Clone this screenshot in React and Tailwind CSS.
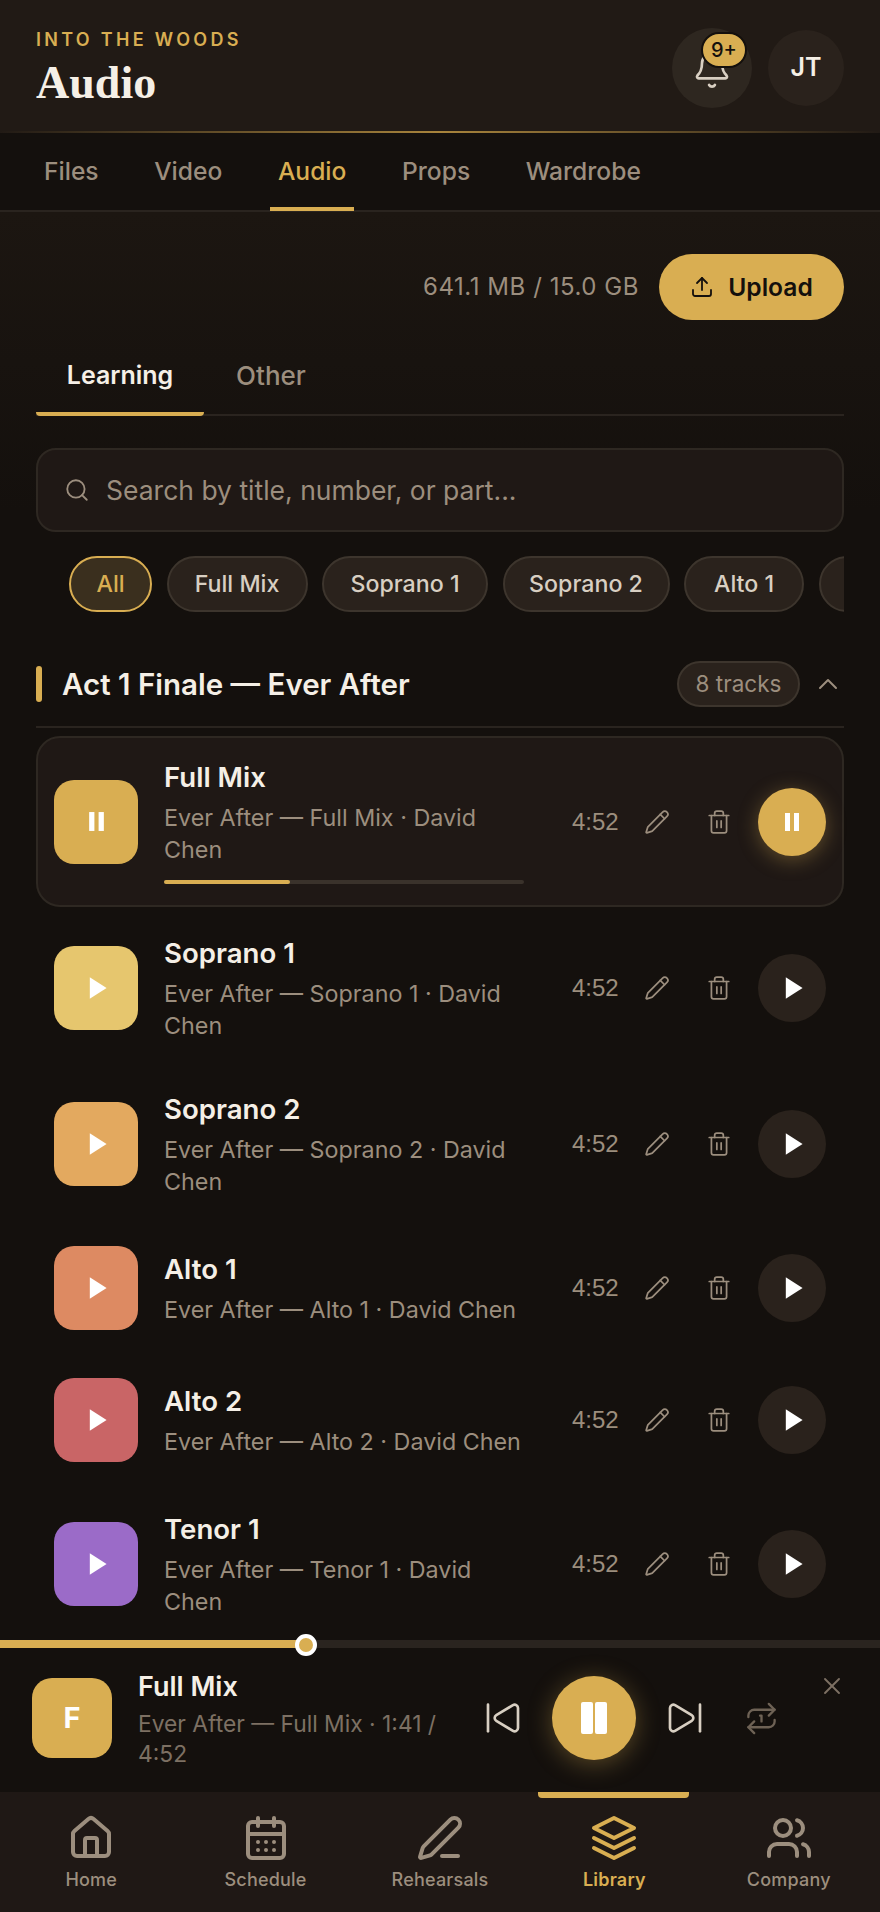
import React from "react";
import {
  Bell,
  CalendarDays,
  ChevronUp,
  House,
  Pencil,
  PenLine,
  Repeat1,
  Search,
  SkipBack,
  SkipForward,
  Trash2,
  Upload,
  Users,
  X,
} from "lucide-react";

const tracks = [
  { id: 2, name: "Soprano 1", sub: "Ever After — Soprano 1 · David Chen", color: "bg-[#e6c66e]", tall: true },
  { id: 3, name: "Soprano 2", sub: "Ever After — Soprano 2 · David Chen", color: "bg-[#e3a95f]", tall: true },
  { id: 4, name: "Alto 1", sub: "Ever After — Alto 1 · David Chen", color: "bg-[#dd8a62]", tall: false },
  { id: 5, name: "Alto 2", sub: "Ever After — Alto 2 · David Chen", color: "bg-[#c96566]", tall: false },
  { id: 6, name: "Tenor 1", sub: "Ever After — Tenor 1 · David Chen", color: "bg-[#9b6bc8]", tall: true },
];

const mainTabs = ["Files", "Video", "Audio", "Props", "Wardrobe"];
const chips = [
  { label: "All", w: "w-[83px]" },
  { label: "Full Mix", w: "w-[141px]" },
  { label: "Soprano 1", w: "w-[166px]" },
  { label: "Soprano 2", w: "w-[167px]" },
  { label: "Alto 1", w: "w-[120px]" },
  { label: "Alto 2", w: "w-[120px]" },
];

function PlayGlyph({ size = 24 }) {
  return (
    <svg className="ml-[2px]" width={size} height={size} viewBox="0 0 20 20" fill="#fff">
      <path d="M4 1 L18 10 L4 19 Z" />
    </svg>
  );
}

function PauseGlyph({ size = 20 }) {
  return (
    <svg width={size} height={size} viewBox="0 0 20 20" fill="#fff">
      <rect x="3" y="1" width="5" height="18" />
      <rect x="12" y="1" width="5" height="18" />
    </svg>
  );
}

function LayersIcon() {
  return (
    <svg width="48" height="48" viewBox="0 0 24 24" fill="none" stroke="#d9ae52" strokeWidth="2" strokeLinecap="round" strokeLinejoin="round">
      <path d="M12 2 L22 7 L12 12 L2 7 Z" />
      <path d="M2 12 L12 17 L22 12" />
      <path d="M2 17 L12 22 L22 17" />
    </svg>
  );
}

function TrackActions({ playing }) {
  return (
    <div className="flex items-center shrink-0">
      <span className="text-[24px] text-[#9c8e7e] font-['Liberation_Sans',sans-serif] w-[47px]">4:52</span>
      <button className="w-[62px] ml-[7px] flex justify-center text-[#9c8e7e]">
        <Pencil size={26} strokeWidth={1.6} />
      </button>
      <button className="w-[62px] flex justify-center text-[#9c8e7e]">
        <Trash2 size={26} strokeWidth={1.6} />
      </button>
      {playing ? (
        <button className="w-[68px] h-[68px] ml-[8px] rounded-full bg-[#d9ae52] flex items-center justify-center shadow-[0_4px_20px_rgba(217,174,82,0.35)]">
          <PauseGlyph size={20} />
        </button>
      ) : (
        <button className="w-[68px] h-[68px] ml-[8px] rounded-full bg-[#2a221c] flex items-center justify-center">
          <PlayGlyph size={24} />
        </button>
      )}
    </div>
  );
}

function TrackRow({ track }) {
  return (
    <div className={`flex items-center px-[18px] ${track.tall ? "h-[156px]" : "h-[132px]"}`}>
      <div className={`w-[84px] h-[84px] rounded-[20px] shrink-0 flex items-center justify-center ${track.color}`}>
        <PlayGlyph size={24} />
      </div>
      <div className="w-[360px] ml-[26px] mr-[48px] shrink-0">
        <div className="text-[27.6px] leading-[36px] font-semibold text-[#f5efe6]">{track.name}</div>
        <div className="text-[23.3px] leading-[32px] text-[#9c8e7e] mt-[7px]">{track.sub}</div>
      </div>
      <TrackActions />
    </div>
  );
}

function NavItem({ label, icon, active }) {
  return (
    <div className={`flex flex-col items-center pt-[22px] ${active ? "text-[#d9ae52]" : "text-[#9c8e7e]"}`}>
      {icon}
      <span className={`text-[18px] leading-[24px] tracking-[0.2px] mt-[6px] ${active ? "font-semibold" : "font-medium"}`}>{label}</span>
    </div>
  );
}

export default function App() {
  return (
    <div className="w-[880px] h-[1912px] flex flex-col overflow-hidden bg-[#14100d] font-['Inter',sans-serif]">
      <header className="h-[133px] shrink-0 bg-[#211a15] flex items-center justify-between px-[36px] pt-[3px] relative">
        <div className="pt-[3px]">
          <div className="text-[18px] leading-[24px] font-semibold tracking-[3.3px] text-[#d9ae52]">INTO THE WOODS</div>
          <h1 className="mt-[3px] text-[46px] leading-[56px] font-bold text-[#f5efe6] font-['Liberation_Serif',serif]">Audio</h1>
        </div>
        <div className="flex items-center gap-[16px]">
          <button className="relative w-[80px] h-[80px] rounded-full bg-[#2e2720] flex items-center justify-center text-[#d8cfc2]">
            <Bell className="mt-[3px]" size={40} strokeWidth={1.6} />
            <span className="absolute top-[4px] left-[29px] w-[46px] h-[36px] rounded-full bg-[#d9ae52] border-[2px] border-[#14100d] flex items-center justify-center text-[20px] font-medium text-[#14100d]">9+</span>
          </button>
          <button className="w-[76px] h-[76px] rounded-full bg-[#2a221c] text-[#f5efe6] text-[25px] font-semibold">JT</button>
        </div>
        <div className="absolute left-0 right-0 bottom-0 h-[2px] bg-gradient-to-r from-transparent via-[#a8843c] to-transparent"></div>
      </header>

      <nav className="h-[79px] shrink-0 flex items-start pl-[36px] border-b-[2px] border-[#2a241f] bg-[#14100d]">
        {mainTabs.map((tab) => (
          <div
            key={tab}
            className={`h-[78px] px-[8px] mr-[39.6px] pt-[2px] flex items-center text-[24.6px] font-medium border-b-[4px] ${
              tab === "Audio" ? "text-[#d9ae52] border-[#d9ae52]" : "text-[#9c8e7e] border-transparent"
            }`}
          >
            {tab}
          </div>
        ))}
      </nav>

      <main className="flex-1 min-h-0 overflow-hidden bg-[linear-gradient(#1c1611,#14100d_300px)] px-[36px]">
        <div className="flex items-center justify-end mt-[42px]">
          <span className="text-[24px] tracking-[0.55px] text-[#9c8e7e] mr-[20px]">641.1 MB / 15.0 GB</span>
          <button className="w-[185px] h-[66px] rounded-full bg-[#d9ae52] flex items-center justify-center gap-[14px] text-[#14100d] text-[24.6px] font-semibold">
            <Upload size={24} strokeWidth={1.8} />
            Upload
          </button>
        </div>

        <div className="flex border-b-[2px] border-[#2a241f] mt-[22px] h-[74px]">
          <div className="w-[168px] h-[74px] pb-[2px] border-b-[4px] border-[#d9ae52] rounded-b-sm flex items-center justify-center text-[25px] font-semibold text-[#f5efe6]">Learning</div>
          <div className="w-[134px] h-[74px] pb-[3px] border-b-[4px] border-transparent flex items-center justify-center text-[26px] font-medium text-[#9c8e7e]">Other</div>
        </div>

        <div className="mt-[32px] h-[84px] rounded-[20px] bg-[#1f1815] border-[2px] border-[#2e2822] flex items-center px-[26px] gap-[16px] text-[#9c8e7e]">
          <Search size={26} strokeWidth={1.7} />
          <span className="text-[26.5px] pt-[1px]">Search by title, number, or part...</span>
        </div>

        <div className="mt-[24px] h-[56px] flex gap-[14.5px] pl-[33px] overflow-hidden">
          {chips.map((chip) => (
            <div
              key={chip.label}
              className={`h-[56px] shrink-0 rounded-full border-[2px] flex items-center justify-center text-[23.2px] font-medium ${chip.w} ${
                chip.label === "All"
                  ? "bg-[#3a2f1e] border-[#d9ae52] text-[#d9ae52]"
                  : "bg-[#2a221c] border-[#3d352d] text-[#d8cfc2]"
              }`}
            >
              {chip.label}
            </div>
          ))}
        </div>

        <div className="mt-[42px] h-[74px] flex items-center border-b-[2px] border-[#2a241f] pb-[12px]">
          <span className="w-[6px] h-[36px] rounded-full bg-[#d9ae52]"></span>
          <h2 className="ml-[20px] text-[29.5px] font-semibold text-[#f5efe6] flex-1">Act 1 Finale — Ever After</h2>
          <span className="w-[123px] h-[46px] rounded-full bg-[#2a221c] border-[2px] border-[#3d352d] flex items-center justify-center text-[22.5px] text-[#9c8e7e]">8 tracks</span>
          <ChevronUp className="ml-[12px] text-[#9c8e7e]" size={32} strokeWidth={1.5} />
        </div>

        <div className="mt-[8px] h-[171px] rounded-[24px] bg-[#1f1815] border-[2px] border-[#2e2822] flex items-center px-[16px]">
          <div className="w-[84px] h-[84px] rounded-[20px] shrink-0 bg-[#d9ae52] flex items-center justify-center">
            <PauseGlyph size={21} />
          </div>
          <div className="w-[360px] ml-[26px] mr-[48px] shrink-0">
            <div className="text-[27.6px] leading-[36px] font-semibold text-[#f5efe6]">Full Mix</div>
            <div className="text-[23.3px] leading-[32px] text-[#9c8e7e] mt-[7px]">Ever After — Full Mix · David Chen</div>
            <div className="mt-[14px] h-[4px] rounded-full bg-[#3a322b]">
              <div className="h-[4px] w-[35%] rounded-full bg-[#d9ae52]"></div>
            </div>
          </div>
          <TrackActions playing />
        </div>

        <div className="mt-[3px]">
          {tracks.map((track) => (
            <TrackRow key={track.id} track={track} />
          ))}
        </div>
      </main>

      <div className="relative h-[152px] shrink-0 bg-[#14100d] flex items-center pl-[32px] pt-[4px]">
        <div className="absolute left-0 right-0 top-0 h-[8px] bg-[#2a241f]">
          <div className="h-[8px] w-[306px] bg-[#d9ae52]"></div>
          <div className="absolute left-[295px] top-[-6px] w-[22px] h-[22px] rounded-full bg-[#d9ae52] border-[4px] border-white"></div>
        </div>
        <div className="w-[80px] h-[80px] rounded-[20px] shrink-0 bg-[#d9ae52] flex items-center justify-center text-white text-[29px] font-bold">F</div>
        <div className="w-[310px] ml-[26px] pt-[3px] shrink-0">
          <div className="text-[27px] leading-[34px] font-semibold text-[#f5efe6]">Full Mix</div>
          <div className="text-[22.8px] leading-[30px] text-[#7d7063] mt-[5px]">Ever After — Full Mix · 1:41 / 4:52</div>
        </div>
        <div className="flex items-center">
          <SkipBack className="ml-[35px] text-[#d8cfc2]" size={40} strokeWidth={1.6} />
          <button className="w-[84px] h-[84px] ml-[29px] rounded-full bg-[#d9ae52] flex items-center justify-center shadow-[0_4px_24px_rgba(217,174,82,0.35)]">
            <svg width="26" height="32" viewBox="0 0 26 32" fill="#fff">
              <rect x="0" y="0" width="12" height="32" rx="2" />
              <rect x="14" y="0" width="12" height="32" rx="2" />
            </svg>
          </button>
          <SkipForward className="ml-[29px] text-[#d8cfc2]" size={40} strokeWidth={1.6} />
          <Repeat1 className="ml-[39px] text-[#6e6255]" size={35} strokeWidth={1.6} />
        </div>
        <X className="absolute right-[34px] top-[32px] text-[#7d7063]" size={28} strokeWidth={1.6} />
      </div>

      <footer className="relative h-[120px] shrink-0 bg-[#1f1815] px-[4px] grid grid-cols-5">
        <div className="absolute left-[538px] top-0 w-[151px] h-[6px] rounded-b-[4px] bg-[#d9ae52]"></div>
        <NavItem label="Home" icon={<House size={48} strokeWidth={2} />} />
        <NavItem label="Schedule" icon={<CalendarDays size={48} strokeWidth={2} />} />
        <NavItem label="Rehearsals" icon={<PenLine size={48} strokeWidth={2} />} />
        <NavItem label="Library" active icon={<LayersIcon />} />
        <NavItem label="Company" icon={<Users size={48} strokeWidth={2} />} />
      </footer>
    </div>
  );
}
